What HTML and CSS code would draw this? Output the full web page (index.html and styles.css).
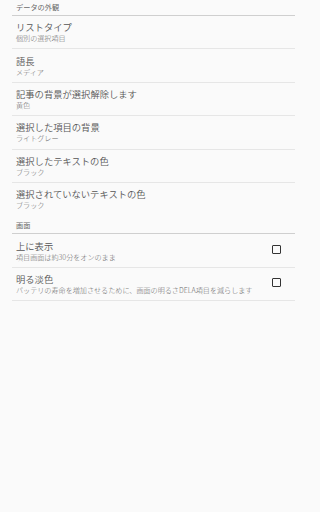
FILE: index.html
```html
<!DOCTYPE html>
<html lang="ja">
<head>
<meta charset="utf-8">
<link rel="stylesheet" href="styles.css">
</head>
<body>
<div class="list">
  <div class="cat">データの外観</div>
  <div class="item"><div class="text"><div class="title">リストタイプ</div><div class="sub">個別の選択項目</div></div></div>
  <div class="item"><div class="text"><div class="title">語長</div><div class="sub">メディア</div></div></div>
  <div class="item"><div class="text"><div class="title">記事の背景が選択解除します</div><div class="sub">黄色</div></div></div>
  <div class="item"><div class="text"><div class="title">選択した項目の背景</div><div class="sub">ライトグレー</div></div></div>
  <div class="item"><div class="text"><div class="title">選択したテキストの色</div><div class="sub">ブラック</div></div></div>
  <div class="item last"><div class="text"><div class="title">選択されていないテキストの色</div><div class="sub">ブラック</div></div></div>
  <div class="cat second">画面</div>
  <div class="item"><div class="text"><div class="title">上に表示</div><div class="sub">項目画面は約30分をオンのまま</div></div><span class="check"></span></div>
  <div class="item"><div class="text"><div class="title">明る淡色</div><div class="sub">バッテリの寿命を増加させるために、画面の明るさDELA項目を減らします</div></div><span class="check"></span></div>
</div>
</body>
</html>
```
FILE: styles.css
```css
html, body {
  margin: 0;
  padding: 0;
  background: #fafafa;
}
body {
  font-family: "Noto Sans CJK JP", "Roboto", sans-serif;
  width: 307px;
  height: 512px;
  overflow: hidden;
}
.list {
  margin: 0 12px;
  display: flex;
  flex-direction: column;
}
.cat {
  height: 15px;
  line-height: 15px;
  font-size: 7.2px;
  color: #6a6a6a;
  padding-left: 4px;
  border-bottom: 1.5px solid #cfcfcf;
  box-sizing: content-box;
}
.cat.second {
  margin-top: 2px;
}
.item {
  display: flex;
  align-items: center;
  padding: 5px 0 5px 4px;
  border-bottom: 1px solid #e6e6e6;
  height: 22.4px;
  box-sizing: content-box;
}
.item.last {
  border-bottom-color: transparent;
}
.text {
  flex: 1;
  display: flex;
  flex-direction: column;
  gap: 1px;
}
.title {
  font-size: 9.3px;
  line-height: 12px;
  font-weight: 350;
  color: #555;
  white-space: nowrap;
}
.sub {
  font-size: 7.1px;
  line-height: 9px;
  font-weight: 300;
  color: #6a6a6a;
  white-space: nowrap;
}
.check {
  width: 7px;
  height: 7px;
  border: 1.6px solid #333;
  border-radius: 1px;
  margin-right: 14px;
  margin-top: -2px;
  flex: none;
}
```
